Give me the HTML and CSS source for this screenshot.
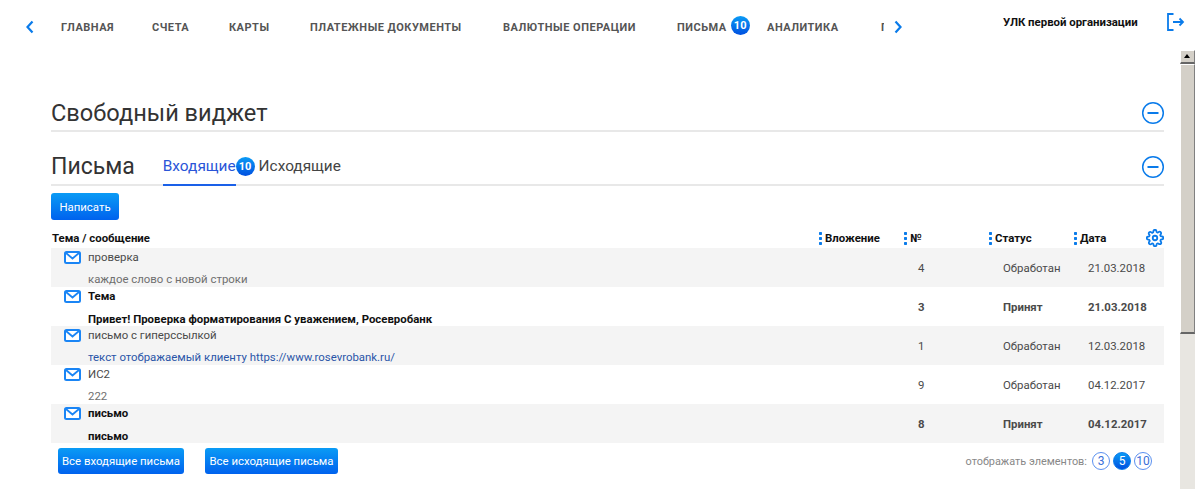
FILE: index.html
```html
<!DOCTYPE html>
<html lang="ru">
<head>
    <meta charset="UTF-8">
    <title>Письма</title>
    <link rel="stylesheet" href="styles.css">
</head>
<body>
    <header class="topbar">
        <svg class="arrow arrow-left" width="10" height="14" viewBox="0 0 10 14"><path d="M7.500 1.500 2.500 7l5 5.500" fill="none" stroke="#0a7bea" stroke-width="2.200"/></svg>
        <nav class="menu">
            <a class="menu-item w-glavnaya">ГЛАВНАЯ</a>
            <a class="menu-item w-scheta">СЧЕТА</a>
            <a class="menu-item w-karty">КАРТЫ</a>
            <a class="menu-item w-plat">ПЛАТЕЖНЫЕ ДОКУМЕНТЫ</a>
            <a class="menu-item w-val">ВАЛЮТНЫЕ ОПЕРАЦИИ</a>
            <a class="menu-item w-pisma">ПИСЬМА<span class="badge">10</span></a>
            <a class="menu-item w-anal">АНАЛИТИКА</a>
            <a class="menu-item w-cut">ПРОЧЕЕ</a>
        </nav>
        <svg class="arrow arrow-right" width="10" height="14" viewBox="0 0 10 14"><path d="M2.500 1.500 7.500 7l-5 5.500" fill="none" stroke="#0a7bea" stroke-width="2.200"/></svg>
        <div class="org">УЛК первой организации</div>
        <svg class="logout" width="20" height="20" viewBox="0 0 20 20"><path d="M7.500 2H2v16h5.500M7 10h10M13.500 6.500 17 10l-3.500 3.500" fill="none" stroke="#0a7bea" stroke-width="1.800"/></svg>
    </header>

    <div class="page">
        <main class="content">
            <section class="widget-head first">
                <h2 class="widget-title">Свободный виджет</h2>
                <svg class="collapse" width="24" height="24" viewBox="0 0 24 24"><circle cx="12" cy="12" r="10.300" fill="none" stroke="#0a7bea" stroke-width="1.500"/><path d="M6.500 12h11" stroke="#0a7bea" stroke-width="2"/></svg>
            </section>

            <section class="widget-head second">
                <h2 class="widget-title title-letters">Письма</h2>
                <div class="tabs">
                    <a class="tab active">Входящие</a><span class="badge tab-badge">10</span><a class="tab">Исходящие</a>
                </div>
                <svg class="collapse" width="24" height="24" viewBox="0 0 24 24"><circle cx="12" cy="12" r="10.300" fill="none" stroke="#0a7bea" stroke-width="1.500"/><path d="M6.500 12h11" stroke="#0a7bea" stroke-width="2"/></svg>
            </section>

            <button class="btn btn-write">Написать</button>

            <div class="table-head">
                <div class="col-subject">Тема / сообщение</div>
                <div class="col-attach"><i class="dots"></i>Вложение</div>
                <div class="col-num"><i class="dots"></i>№</div>
                <div class="col-status"><i class="dots"></i>Статус</div>
                <div class="col-date"><i class="dots"></i>Дата</div>
                <svg class="gear" width="18" height="18" viewBox="0 0 24 24" fill="none" stroke="#0a7bea" stroke-width="2.400"><circle cx="12" cy="12" r="3"/><path d="M19.400 15a1.650 1.650 0 0 0 .33 1.820l.06.06a2 2 0 1 1-2.830 2.830l-.06-.06a1.650 1.650 0 0 0-2.820 1.170V21a2 2 0 0 1-4 0v-.09a1.650 1.650 0 0 0-2.800-1.170l-.06.06a2 2 0 1 1-2.830-2.830l.06-.06a1.650 1.650 0 0 0-1.170-2.800H3a2 2 0 0 1 0-4h.09a1.650 1.650 0 0 0 1.170-2.800l-.06-.06a2 2 0 1 1 2.830-2.830l.06.06a1.650 1.650 0 0 0 2.800-1.170V3a2 2 0 0 1 4 0v.09a1.650 1.650 0 0 0 2.800 1.170l.06-.06a2 2 0 1 1 2.830 2.830l-.06.06a1.650 1.650 0 0 0 1.170 2.800H21a2 2 0 0 1 0 4h-.09a1.650 1.650 0 0 0-1.510 1z"/></svg>
            </div>

            <div class="row shaded">
                <svg class="mail" width="17" height="13" viewBox="0 0 17 13"><rect x="1" y="1" width="15" height="11" rx="1.500" fill="#fff" stroke="#1a85f5" stroke-width="2"/><path d="m2 2 6.500 5.500L15 2" fill="none" stroke="#1a85f5" stroke-width="1.800"/></svg>
                <div class="subject"><div>проверка</div><div class="message">каждое слово с новой строки</div></div>
                <div class="cell-num">4</div><div class="cell-status">Обработан</div><div class="cell-date">21.03.2018</div>
            </div>
            <div class="row unread">
                <svg class="mail" width="17" height="13" viewBox="0 0 17 13"><rect x="1" y="1" width="15" height="11" rx="1.500" fill="#fff" stroke="#1a85f5" stroke-width="2"/><path d="m2 2 6.500 5.500L15 2" fill="none" stroke="#1a85f5" stroke-width="1.800"/></svg>
                <div class="subject"><div>Тема</div><div class="message">Привет! Проверка форматирования С уважением, Росевробанк</div></div>
                <div class="cell-num">3</div><div class="cell-status">Принят</div><div class="cell-date">21.03.2018</div>
            </div>
            <div class="row shaded">
                <svg class="mail" width="17" height="13" viewBox="0 0 17 13"><rect x="1" y="1" width="15" height="11" rx="1.500" fill="#fff" stroke="#1a85f5" stroke-width="2"/><path d="m2 2 6.500 5.500L15 2" fill="none" stroke="#1a85f5" stroke-width="1.800"/></svg>
                <div class="subject"><div>письмо с гиперссылкой</div><div class="message link">текст отображаемый клиенту https://www.rosevrobank.ru/</div></div>
                <div class="cell-num">1</div><div class="cell-status">Обработан</div><div class="cell-date">12.03.2018</div>
            </div>
            <div class="row">
                <svg class="mail" width="17" height="13" viewBox="0 0 17 13"><rect x="1" y="1" width="15" height="11" rx="1.500" fill="#fff" stroke="#1a85f5" stroke-width="2"/><path d="m2 2 6.500 5.500L15 2" fill="none" stroke="#1a85f5" stroke-width="1.800"/></svg>
                <div class="subject"><div>ИС2</div><div class="message">222</div></div>
                <div class="cell-num">9</div><div class="cell-status">Обработан</div><div class="cell-date">04.12.2017</div>
            </div>
            <div class="row shaded unread">
                <svg class="mail" width="17" height="13" viewBox="0 0 17 13"><rect x="1" y="1" width="15" height="11" rx="1.500" fill="#fff" stroke="#1a85f5" stroke-width="2"/><path d="m2 2 6.500 5.500L15 2" fill="none" stroke="#1a85f5" stroke-width="1.800"/></svg>
                <div class="subject"><div>письмо</div><div class="message">письмо</div></div>
                <div class="cell-num">8</div><div class="cell-status">Принят</div><div class="cell-date">04.12.2017</div>
            </div>

            <div class="table-foot">
                <button class="btn btn-all btn-in">Все входящие письма</button>
                <button class="btn btn-all btn-out">Все исходящие письма</button>
                <div class="page-size">
                    <span class="page-size-label">отображать элементов:</span>
                    <a class="size-item">3</a><a class="size-item current">5</a><a class="size-item">10</a>
                </div>
            </div>
        </main>
        <div class="scrollbar">
            <div class="scroll-btn"></div>
            <div class="scroll-thumb"></div>
        </div>
    </div>
</body>
</html>
```

FILE: styles.css
```css
html, body {
    margin: 0;
    height: 489px;
    overflow: hidden;
    background: #fff;
}
body {
    font-family: Roboto, "Noto Sans", sans-serif;
    font-size: 11.4px;
    color: #4a4a4a;
}
.topbar {
    display: flex;
    align-items: center;
    height: 50px;
    padding: 4px 0 0 25px;
    box-sizing: border-box;
}
.arrow-left {
    flex: none;
    margin-right: 26px;
}
.menu {
    display: flex;
    flex: none;
    width: 823px;
    overflow: hidden;
    font-size: 11px;
    font-weight: 700;
    letter-spacing: 0.5px;
    color: #555;
}
.menu-item {
    display: flex;
    align-items: center;
    flex: none;
    white-space: nowrap;
}
.w-glavnaya { width: 91px; }
.w-scheta { width: 77px; }
.w-karty { width: 81px; }
.w-plat { width: 193px; }
.w-val { width: 174px; }
.w-pisma { width: 90px; }
.w-anal { width: 114px; }
.badge {
    display: inline-block;
    flex: none;
    width: 19px;
    height: 19px;
    line-height: 19px;
    border-radius: 50%;
    background: linear-gradient(#0a9bf5, #0050e0);
    color: #fff;
    font-size: 11px;
    font-weight: 700;
    text-align: center;
    letter-spacing: 0;
    margin: 0 0 4px 4px;
}
.arrow-right {
    flex: none;
    margin-left: 9px;
}
.org {
    flex: none;
    margin-left: 100px;
    margin-top: -10px;
    font-size: 11.4px;
    font-weight: 700;
    color: #111;
    white-space: nowrap;
}
.logout {
    flex: none;
    margin-left: 28px;
    margin-top: -10px;
}
.page {
    display: flex;
    height: 439px;
}
.content {
    width: 1113px;
    margin-left: 51px;
}
.widget-head {
    position: relative;
    display: flex;
    align-items: flex-end;
    border-bottom: 2px solid #e8e8e8;
}
.widget-head.first {
    margin-top: 46px;
    height: 34px;
}
.widget-head.second {
    margin-top: 18px;
    height: 34px;
}
.widget-title {
    margin: 0;
    font-size: 23.6px;
    font-weight: 400;
    color: #333;
    line-height: 34px;
}
.widget-title.title-letters {
    font-size: 23px;
}
.collapse {
    position: absolute;
    right: -1px;
    top: 5px;
}
.tabs {
    display: flex;
    align-items: flex-end;
    margin-left: 28px;
    font-size: 15.4px;
}
.tab {
    color: #444;
    line-height: 20px;
    padding-bottom: 8px;
    border-bottom: 2px solid transparent;
    margin-bottom: -2px;
}
.tab.active {
    color: #2a55d8;
    border-bottom-color: #1a60e8;
}
.tab-badge {
    margin: 0 4px 8px 0;
}
.btn {
    display: block;
    border: 0;
    border-radius: 3px;
    background: linear-gradient(#0a9bf5, #0062ee);
    color: #fff;
    font-family: inherit;
    font-size: 11.4px;
    padding: 0;
}
.btn-write {
    width: 68px;
    height: 27px;
    margin-top: 7px;
}
.table-head {
    position: relative;
    display: flex;
    align-items: center;
    height: 28px;
    padding: 8px 0 0 1px;
    box-sizing: border-box;
    font-weight: 700;
    color: #111;
}
.dots {
    display: inline-block;
    width: 3px;
    height: 14px;
    margin-right: 3px;
    vertical-align: middle;
    background: radial-gradient(circle, #0a7bea 1.400px, transparent 1.500px) 0 0 / 3px 5px;
}
.col-subject { width: 767px; }
.col-attach { width: 85px; }
.col-num { width: 85px; }
.col-status { width: 85px; }
.col-date { width: 70px; }
.gear {
    position: absolute;
    right: 0;
    top: 9px;
}
.row {
    display: flex;
    height: 39px;
}
.row.shaded {
    background: #f4f4f4;
}
.row.unread {
    font-weight: 700;
}
.mail {
    flex: none;
    margin: 3px 7px 0 13px;
}
.subject {
    width: 830px;
    margin-top: 1px;
    line-height: 17px;
}
.unread .subject {
    color: #111;
}
.message {
    margin-top: 5px;
    color: #6f6f6f;
}
.unread .message {
    margin-top: 6px;
    color: #111;
}
.message.link {
    color: #2a55a8;
}
.cell-num, .cell-status, .cell-date {
    align-self: center;
    margin-top: 1px;
}
.cell-num { width: 85px; }
.cell-status { width: 85px; }
.table-foot {
    display: flex;
    align-items: center;
    margin-top: 5px;
    padding-left: 7px;
    gap: 21px;
}
.btn-all {
    height: 26px;
}
.btn-in { width: 126px; }
.btn-out { width: 133px; }
.page-size {
    display: flex;
    align-items: center;
    gap: 3px;
    margin: 0 12px 0 auto;
    color: #888;
}
.page-size-label {
    margin-right: 2px;
    font-size: 10.9px;
}
.size-item {
    width: 16px;
    height: 16px;
    line-height: 16px;
    border: 1.500px solid #5a90f0;
    border-radius: 50%;
    text-align: center;
    font-size: 12px;
    color: #3a6fd8;
}
.size-item.current {
    background: linear-gradient(#0a9bf5, #0050e0);
    border-color: #0a7bea;
    color: #fff;
}
.scrollbar {
    width: 15px;
    margin-left: 16px;
    background: #e8e6e1;
}
.scroll-btn {
    position: relative;
    height: 14px;
    background: #d4d0c8;
    border: 1px solid #fff;
    border-right-color: #808080;
    border-bottom: 2px solid #666;
    box-sizing: border-box;
}
.scroll-btn::after {
    content: "";
    position: absolute;
    left: 3px;
    top: 3px;
    border: 3.500px solid transparent;
    border-top: 0;
    border-bottom: 4px solid #000;
}
.scroll-thumb {
    height: 270px;
    background: #d4d0c8;
    border: 1px solid #fff;
    border-right-color: #808080;
    border-bottom: 2px solid #666;
    box-sizing: border-box;
}
```
